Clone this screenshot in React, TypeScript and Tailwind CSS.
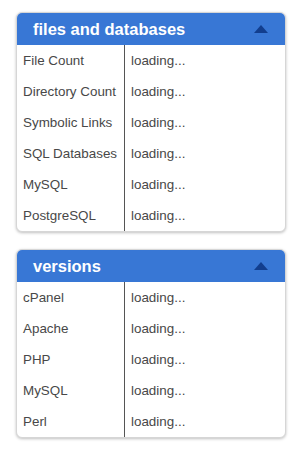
import React from 'react';

type Section = { title: string; rows: string[] };

const sections: Section[] = [
  {
    title: 'files and databases',
    rows: ['File Count', 'Directory Count', 'Symbolic Links', 'SQL Databases', 'MySQL', 'PostgreSQL'],
  },
  {
    title: 'versions',
    rows: ['cPanel', 'Apache', 'PHP', 'MySQL', 'Perl'],
  },
];

function Panel({ title, rows }: Section) {
  return (
    <div className="w-[270px] rounded-[6px] border border-[#d6d6d6] bg-white shadow-[0_1px_3px_rgba(0,0,0,0.25)] overflow-hidden">
      <div className="flex h-[32px] items-center justify-between bg-[#3877d5] pl-[16px] pr-[17px]">
        <span className="text-[16.5px] font-bold text-white">{title}</span>
        <svg width="14" height="8" viewBox="0 0 14 8" className="mb-[1px]">
          <polygon points="7,0 14,8 0,8" fill="#123e8e" />
        </svg>
      </div>
      <div className="flex">
        <div className="w-[108px] border-r border-[#555]">
          {rows.map((r, i) => (
            <div key={i} className="flex h-[31px] items-center pl-[6px] pt-[2px] text-[13.4px] text-[#484848]">
              {r}
            </div>
          ))}
        </div>
        <div className="flex-1">
          {rows.map((_, i) => (
            <div key={i} className="flex h-[31px] items-center pl-[6px] pt-[2px] text-[13.4px] text-[#484848]">
              loading...
            </div>
          ))}
        </div>
      </div>
    </div>
  );
}

export default function App() {
  return (
    <div className="flex min-h-[457px] w-[299px] flex-col gap-[17px] bg-white pl-[16px] pt-[12px] font-['Liberation_Sans',Arial,sans-serif]">
      {sections.map((s) => (
        <Panel key={s.title} {...s} />
      ))}
    </div>
  );
}
